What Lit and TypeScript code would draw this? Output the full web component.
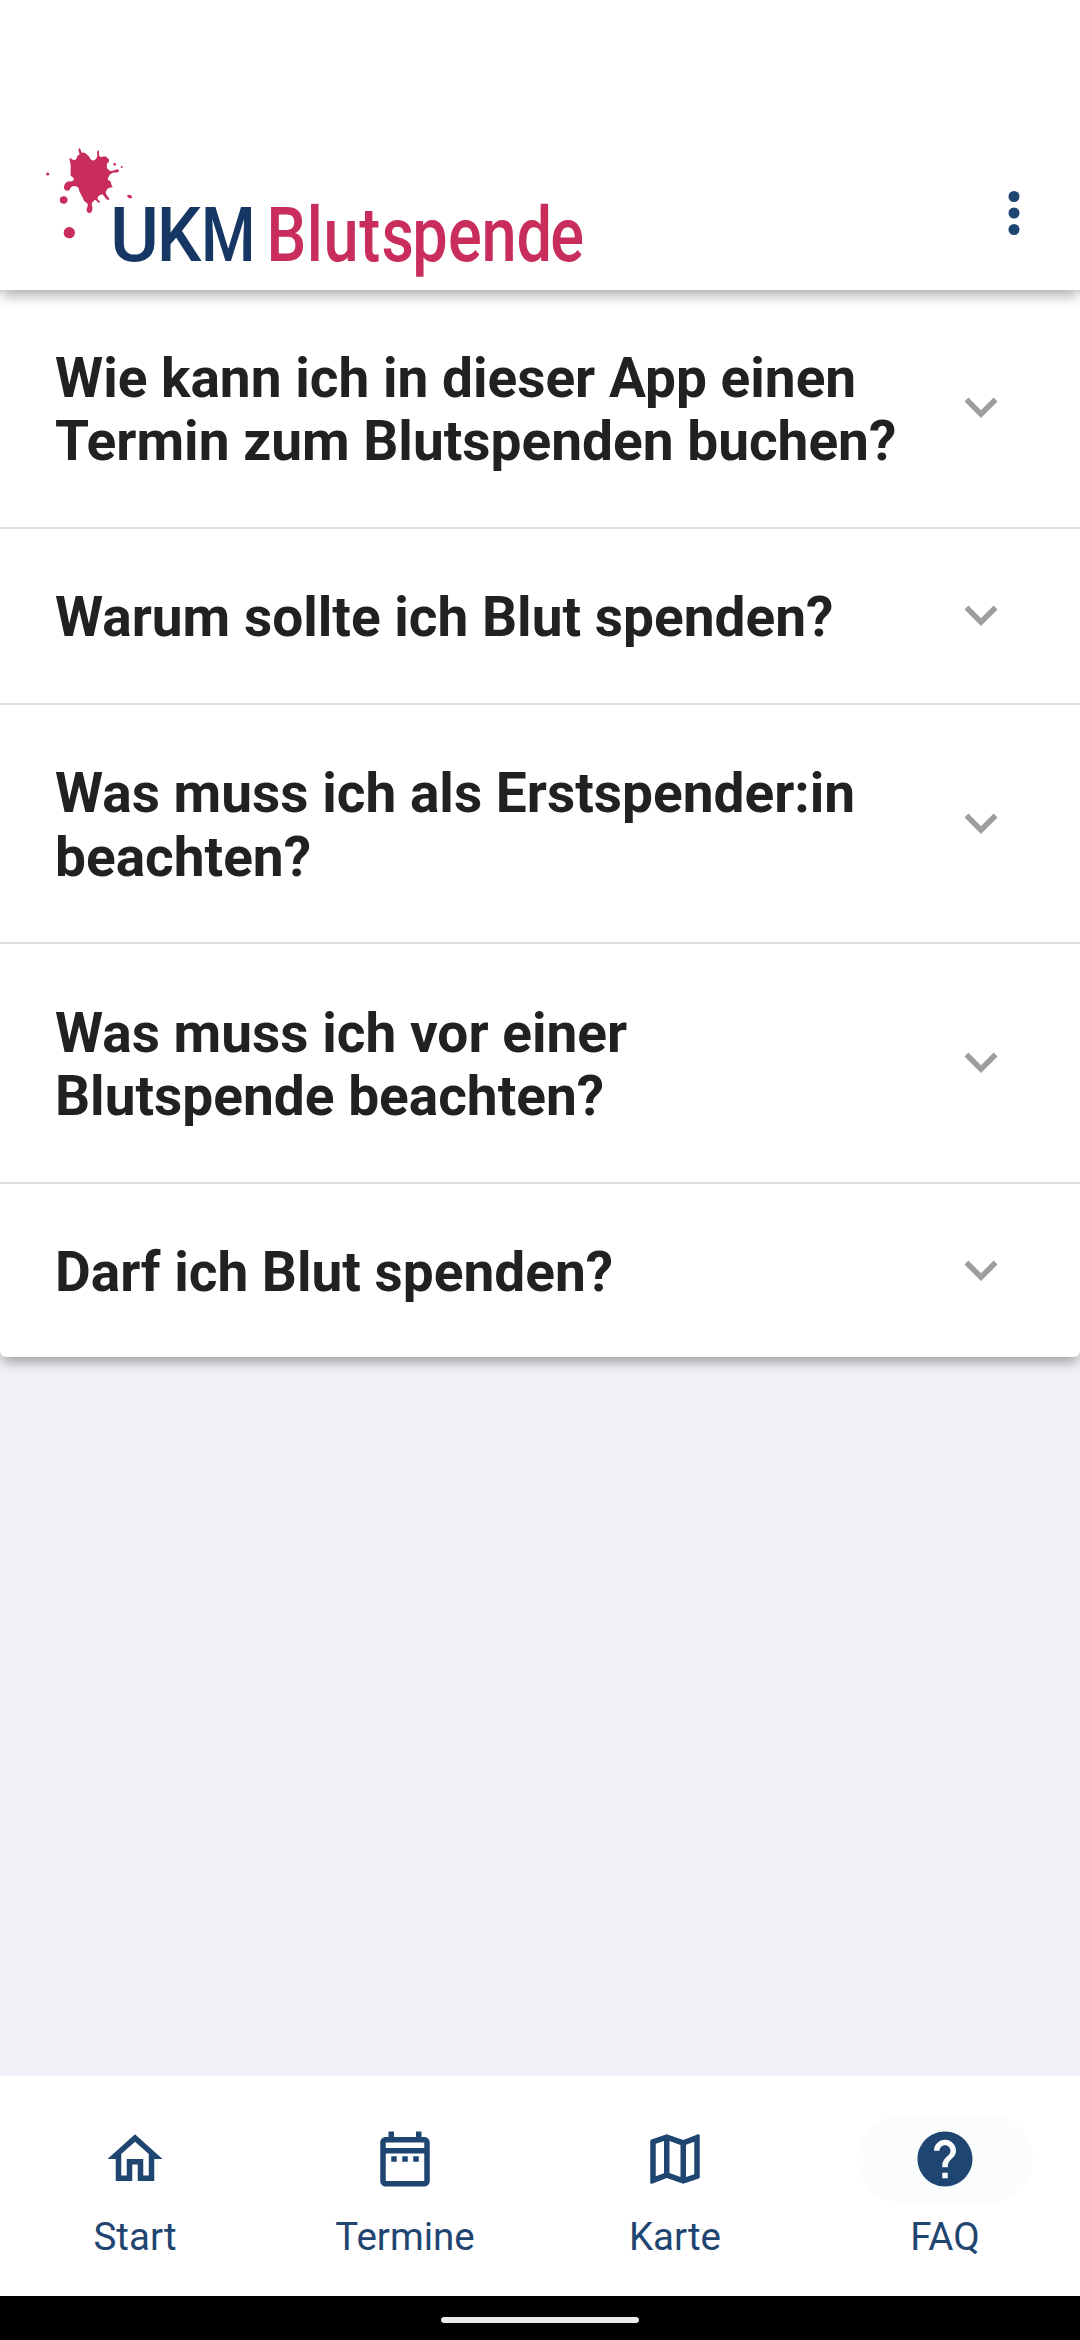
import { LitElement, html, css, svg } from "lit";
import { customElement, property } from "lit/decorators.js";

const QUESTIONS = [
  "Wie kann ich in dieser App einen Termin zum Blutspenden buchen?",
  "Warum sollte ich Blut spenden?",
  "Was muss ich als Erstspender:in beachten?",
  "Was muss ich vor einer Blutspende beachten?",
  "Darf ich Blut spenden?",
];

const ICONS = {
  home: "M12 5.69l5 4.5V18h-2v-6H9v6H7v-7.81l5-4.5M12 3L2 12h3v8h6v-6h2v6h6v-8h3L12 3z",
  calendar:
    "M7 11h2v2H7zM11 11h2v2h-2zM15 11h2v2h-2zM19 4h-1V2h-2v2H8V2H6v2H5c-1.1 0-2 .9-2 2v14c0 1.1.9 2 2 2h14c1.1 0 2-.9 2-2V6c0-1.1-.9-2-2-2zm0 16H5V10h14v10zm0-12H5V6h14v2z",
  map: "M20.5 3l-.16.03L15 5.1 9 3 3.36 4.9c-.21.07-.36.25-.36.48V20.5c0 .28.22.5.5.5l.16-.03L9 18.9l6 2.1 5.64-1.9c.21-.07.36-.25.36-.48V3.5c0-.28-.22-.5-.5-.5zM10 5.47l4 1.4v11.66l-4-1.4V5.47zm-5 .99l3-1.01v11.7l-3 1.16V6.46zm14 11.08l-3 1.01V6.86l3-1.16v11.84z",
  help: "M12 2C6.48 2 2 6.48 2 12s4.48 10 10 10 10-4.48 10-10S17.52 2 12 2zm1 17h-2v-2h2v2zm2.07-7.75l-.9.92C13.45 12.9 13 13.5 13 15h-2v-.5c0-1.1.45-2.1 1.17-2.83l1.24-1.26c.37-.36.59-.86.59-1.41 0-1.1-.9-2-2-2s-2 .9-2 2H8c0-2.21 1.79-4 4-4s4 1.79 4 4c0 .88-.36 1.68-.93 2.25z",
};

const TABS = [
  { label: "Start", icon: ICONS.home, active: false },
  { label: "Termine", icon: ICONS.calendar, active: false },
  { label: "Karte", icon: ICONS.map, active: false },
  { label: "FAQ", icon: ICONS.help, active: true },
];

const SPLAT = svg`
  <g transform="scale(0.33333)" fill="#c82d5c">
    <path d="M146 55 Q151 53 152 60 L155 68 Q165 66 171 74 L178 80 Q184 94 192 91 Q201 88 202 76 Q200 62 206 60 Q208 66 207 77 Q214 84 222 79 Q230 79 232 84 Q240 88 236 96 Q228 101 231 106 Q228 114 236 119 Q240 125 248 122 L262 118 Q268 119 267 125 Q262 128 248 128 Q238 132 235 142 L233 150 Q245 153 243 161 L248 172 Q234 173 231 179 Q225 184 228 192 L239 208 Q236 212 228 206 L218 193 Q209 193 203 201 L203 208 L211 216 Q206 221 200 213 L196 209 Q187 213 185 221 Q189 233 186 243 Q183 251 176 249 Q169 246 170 236 Q175 227 173 221 Q160 214 159 205 L148 184 Q147 172 141 170 Q132 166 124 171 Q119 175 119 180 Q110 185 103 178 Q100 169 105 161 Q111 154 119 154 Q128 155 132 149 Q132 142 122 137 L122 104 L118 88 Q121 82 126 88 Q134 92 139 87 Q140 77 149 73 Q144 62 146 55Z"/>
    <ellipse cx="101" cy="210" rx="11.5" ry="11"/>
    <circle cx="118" cy="308" r="17"/>
    <ellipse cx="53" cy="132" rx="5" ry="4.5"/>
    <circle cx="254" cy="103" r="4"/>
    <circle cx="275" cy="111" r="3"/>
    <path d="M292 196 Q299 192 305 198 Q309 202 303 205 Q297 206 292 200Z"/>
  </g>`;

@customElement("faq-item")
export class FaqItem extends LitElement {
  @property() question = "";

  static styles = css`
    :host {
      display: flex;
      align-items: center;
      padding: 57.4px 66px 52.6px 55px;
    }
    .question {
      flex: 1;
      margin-right: 30px;
      font-size: 55px;
      line-height: 63.8px;
      font-weight: 700;
      color: #212121;
    }
    .chevron {
      flex: none;
      width: 66px;
      height: 66px;
      margin: -6px 0 0;
      fill: #9e9e9e;
    }
  `;

  render() {
    return html`
      <div class="question">${this.question}</div>
      <svg class="chevron" viewBox="0 0 24 24"><path d="M16.59 8.59L12 13.17 7.41 8.59 6 10l6 6 6-6z" /></svg>
    `;
  }
}

@customElement("app-root")
export class AppRoot extends LitElement {
  static styles = css`
    :host {
      display: block;
      font-family: Roboto, "Liberation Sans", sans-serif;
    }
    .screen {
      display: flex;
      flex-direction: column;
      width: 1080px;
      height: 2340px;
      overflow: hidden;
      background: #f0f0f6;
    }
    .header {
      flex: none;
      display: flex;
      justify-content: space-between;
      align-items: flex-end;
      box-sizing: border-box;
      height: 290px;
      padding: 0 33px 0 30px;
      background: #fff;
      position: relative;
      z-index: 1;
      box-shadow: 0 8px 11px -3px rgba(0, 0, 0, 0.2), 0 5px 14px rgba(0, 0, 0, 0.16);
    }
    .logo {
      width: 560px;
      height: 160px;
      overflow: visible;
    }
    .menu {
      width: 66px;
      height: 66px;
      margin-bottom: 44px;
      fill: #1f4571;
    }
    .list {
      flex: none;
      background: #fff;
      border-radius: 6px;
      margin-top: -0.8px;
      height: 1067.8px;
      box-shadow: 0 8px 11px -3px rgba(0, 0, 0, 0.2), 0 5px 14px rgba(0, 0, 0, 0.16);
    }
    .row + .row {
      border-top: 2px solid #dedede;
    }
    .space {
      flex: 1;
    }
    .tabs {
      flex: none;
      display: grid;
      grid-template-columns: repeat(4, 270px);
      height: 220px;
      background: #fff;
      color: #1f4571;
    }
    .tab {
      display: flex;
      flex-direction: column;
      align-items: center;
      padding-top: 39px;
      font-size: 38.5px;
      line-height: 44px;
    }
    .pill {
      display: flex;
      align-items: center;
      justify-content: center;
      width: 176px;
      height: 88px;
      margin-bottom: 12px;
      border-radius: 44px;
    }
    .active .pill {
      background: #fbfdfd;
    }
    .icon {
      width: 66px;
      height: 66px;
      fill: currentColor;
    }
    .system {
      flex: none;
      display: flex;
      align-items: center;
      justify-content: center;
      height: 44px;
      padding-top: 4px;
      box-sizing: border-box;
      background: #000;
    }
    .handle {
      width: 198px;
      height: 6px;
      border-radius: 3px;
      background: #eaeaea;
    }
    .brand {
      font-weight: 500;
      font-size: 76px;
    }
  `;

  render() {
    return html`
      <div class="screen">
        <header class="header">
          <svg class="logo" viewBox="0 0 560 160">
            ${SPLAT}
            <text class="brand" y="131" fill="#163763"><tspan x="80" textLength="49" lengthAdjust="spacingAndGlyphs">U</tspan><tspan x="126.7" textLength="44.5" lengthAdjust="spacingAndGlyphs">K</tspan><tspan x="171.1" textLength="54.5" lengthAdjust="spacingAndGlyphs">M</tspan></text>
            <text class="brand" transform="translate(236.6 131) scale(0.83 1)" x="0 48.4 68.6 111.5 138.4 175.5 218.6 258.9 301 341.9" fill="#c82d5c">Blutspende</text>
          </svg>
          <svg class="menu" viewBox="0 0 24 24">
            <circle cx="12" cy="6" r="2" /><circle cx="12" cy="12" r="2" /><circle cx="12" cy="18" r="2" />
          </svg>
        </header>
        <main class="list">
          ${QUESTIONS.map((q) => html`<div class="row"><faq-item .question=${q}></faq-item></div>`)}
        </main>
        <div class="space"></div>
        <nav class="tabs">
          ${TABS.map(
            (t) => html`
              <div class="tab ${t.active ? "active" : ""}">
                <div class="pill"><svg class="icon" viewBox="0 0 24 24"><path d=${t.icon} /></svg></div>
                <span>${t.label}</span>
              </div>
            `
          )}
        </nav>
        <div class="system"><div class="handle"></div></div>
      </div>
    `;
  }
}
